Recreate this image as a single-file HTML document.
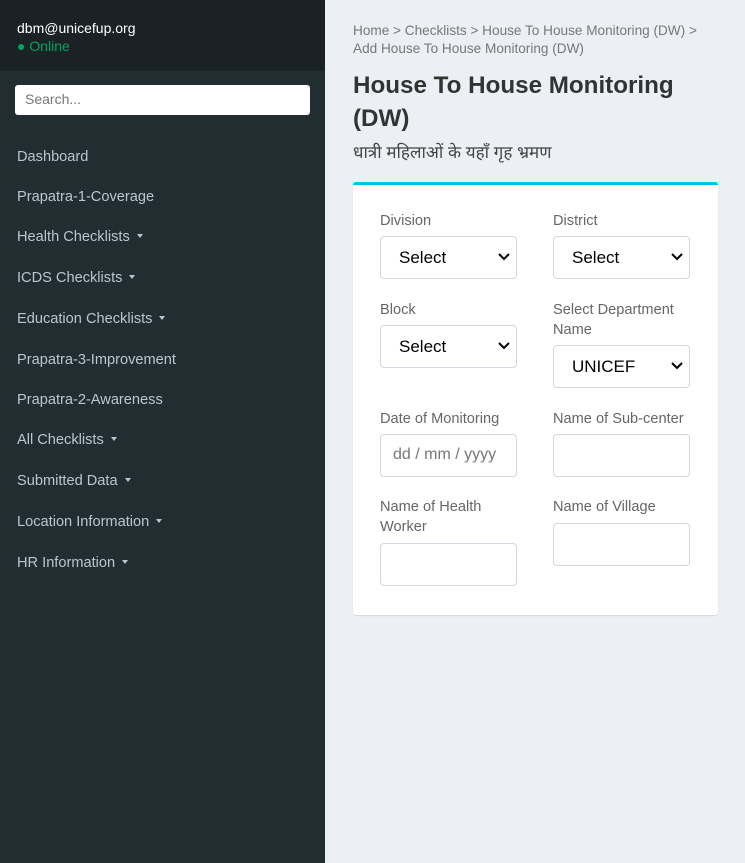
<!DOCTYPE html>
<html><head><meta charset="utf-8"><style>
*{box-sizing:border-box;margin:0;padding:0}
body{width:745px;height:863px;background:#ecf0f5;font-family:"Liberation Sans",sans-serif;position:relative;overflow:hidden}
.sb{position:absolute;left:0;top:0;width:325px;height:863px;background:#222d32}
.hd{position:absolute;left:0;top:0;width:325px;height:71px;background:#1a2226}
.t{position:absolute;white-space:nowrap}
.mi{position:absolute;left:17px;color:#b8c7ce;font-size:14.6px;line-height:20px}
.car{display:inline-block;width:0;height:0;border-left:3px solid transparent;border-right:3px solid transparent;border-top:4px solid #b8c7ce;margin-left:7px;vertical-align:3px}
.lb{position:absolute;color:#666;font-size:14.6px;line-height:20px}
.in{position:absolute;width:137px;height:43px;background:#fff;border:1px solid #d2d6de;border-radius:4px;font-size:17px;color:#000;padding:11px 0 0 18px}
.in svg{position:absolute;right:6px;top:16px}
</style></head><body>
<div class="sb"></div>
<div class="hd"></div>
<div class="t" style="left:17px;top:20px;color:#fff;font-size:14px">dbm@unicefup.org</div>
<div class="t" style="left:17px;top:38px;color:#00a65a;font-size:14px">● Online</div>
<div class="t" style="left:15px;top:85px;width:295px;height:30px;background:#fff;border-radius:3px;color:#777;font-size:14px;padding:6px 10px">Search...</div>
<div class="mi" style="top:147px">Dashboard</div>
<div class="mi" style="top:187px">Prapatra-1-Coverage</div>
<div class="mi" style="top:227px">Health Checklists<span class="car"></span></div>
<div class="mi" style="top:268px">ICDS Checklists<span class="car"></span></div>
<div class="mi" style="top:309px">Education Checklists<span class="car"></span></div>
<div class="mi" style="top:350px">Prapatra-3-Improvement</div>
<div class="mi" style="top:390px">Prapatra-2-Awareness</div>
<div class="mi" style="top:430px">All Checklists<span class="car"></span></div>
<div class="mi" style="top:471px">Submitted Data<span class="car"></span></div>
<div class="mi" style="top:512px">Location Information<span class="car"></span></div>
<div class="mi" style="top:553px">HR Information<span class="car"></span></div>

<div class="t" style="left:353px;top:22px;color:#777;font-size:13.6px;line-height:18px">Home &gt; Checklists &gt; House To House Monitoring (DW) &gt;<br>Add House To House Monitoring (DW)</div>
<div class="t" style="left:353px;top:69px;color:#333;font-size:24.2px;line-height:33px;font-weight:bold">House To House Monitoring<br>(DW)</div>
<div class="t" style="left:353px;top:140px;color:#444;font-size:17px;font-family:'Liberation Sans','Noto Sans CJK SC',sans-serif">धात्री महिलाओं के यहाँ गृह भ्रमण</div>

<div style="position:absolute;left:353px;top:182px;width:365px;height:433px;background:#fff;border-top:3px solid #00c0ef;border-radius:3px;box-shadow:0 1px 1px rgba(0,0,0,.1)"></div>

<div class="lb" style="left:380px;top:211px">Division</div>
<div class="in" style="left:380px;top:236px">Select<svg width="12" height="8" viewBox="0 0 12 8"><path d="M1 1l5 5 5-5" stroke="#000" stroke-width="2" fill="none"/></svg></div>
<div class="lb" style="left:553px;top:211px">District</div>
<div class="in" style="left:553px;top:236px">Select<svg width="12" height="8" viewBox="0 0 12 8"><path d="M1 1l5 5 5-5" stroke="#000" stroke-width="2" fill="none"/></svg></div>
<div class="lb" style="left:380px;top:300px">Block</div>
<div class="in" style="left:380px;top:325px">Select<svg width="12" height="8" viewBox="0 0 12 8"><path d="M1 1l5 5 5-5" stroke="#000" stroke-width="2" fill="none"/></svg></div>
<div class="lb" style="left:553px;top:300px">Select Department<br>Name</div>
<div class="in" style="left:553px;top:345px">UNICEF<svg width="12" height="8" viewBox="0 0 12 8"><path d="M1 1l5 5 5-5" stroke="#000" stroke-width="2" fill="none"/></svg></div>
<div class="lb" style="left:380px;top:409px">Date of Monitoring</div>
<div class="in" style="left:380px;top:434px;color:#777;font-size:16px;padding-left:12px">dd / mm / yyyy</div>
<div class="lb" style="left:553px;top:409px">Name of Sub-center</div>
<div class="in" style="left:553px;top:434px"></div>
<div class="lb" style="left:380px;top:497px">Name of Health<br>Worker</div>
<div class="in" style="left:380px;top:543px"></div>
<div class="lb" style="left:553px;top:497px">Name of Village</div>
<div class="in" style="left:553px;top:523px"></div>
</body></html>
